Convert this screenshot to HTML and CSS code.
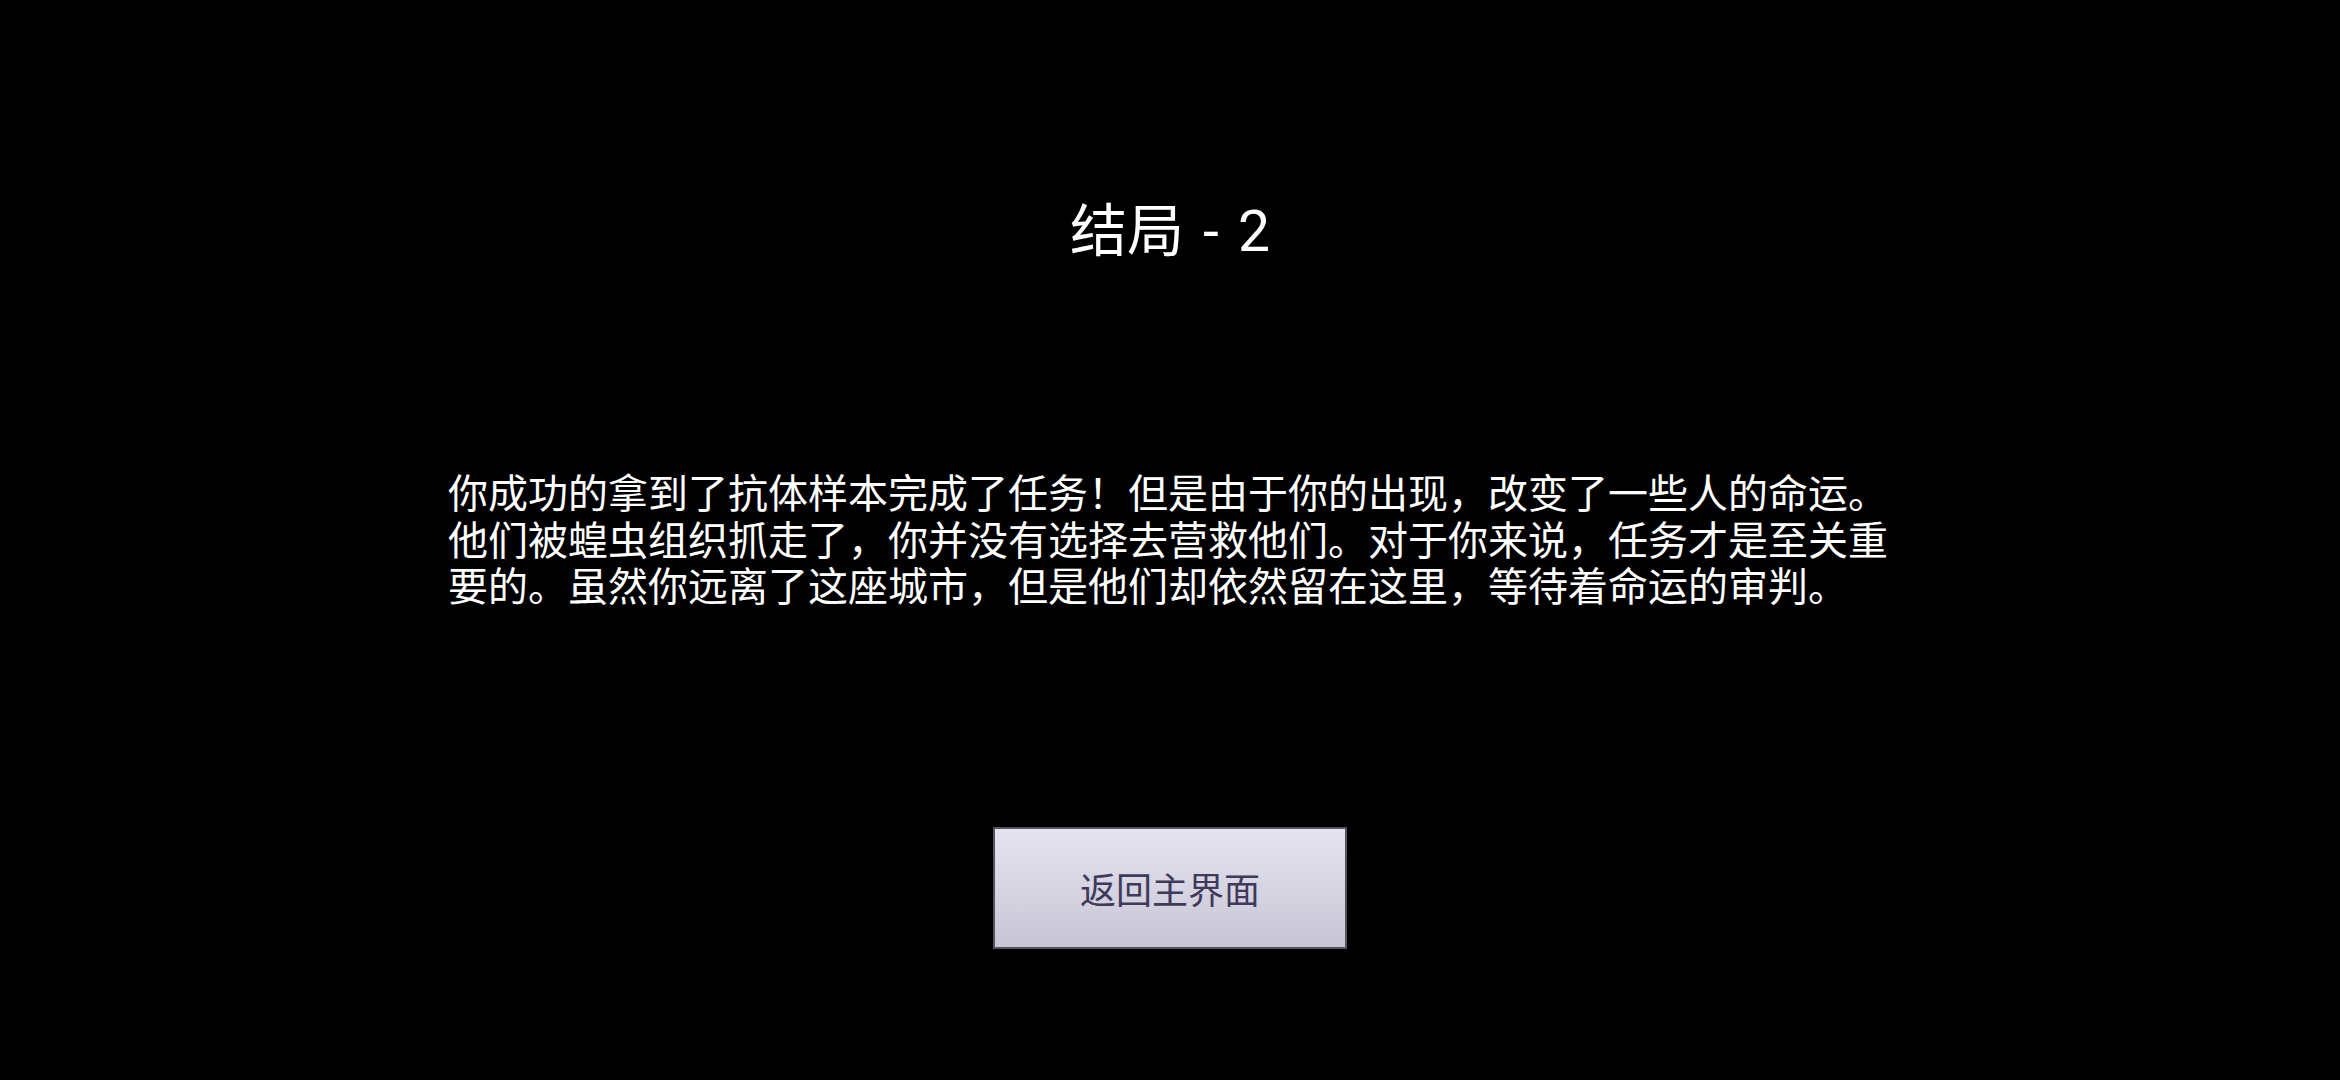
FILE: index.html
```html
<!DOCTYPE html>
<html lang="zh-CN">

<head>
    <meta charset="UTF-8">
    <meta name="viewport" content="width=device-width, initial-scale=1.0">
    <title>结局 - 2</title>
    <link rel="stylesheet" href="styles.css">
</head>

<body>

    <div class="ending">
        <h1 class="ending-title">结局 - 2</h1>

        <p class="ending-text">你成功的拿到了抗体样本完成了任务！但是由于你的出现，改变了一些人的命运。他们被蝗虫组织抓走了，你并没有选择去营救他们。对于你来说，任务才是至关重要的。虽然你远离了这座城市，但是他们却依然留在这里，等待着命运的审判。</p>

        <button class="back-btn">返回主界面</button>
    </div>

</body>

</html>
```

FILE: styles.css
```css
body {
    margin: 0;
    background-color: #000;
    color: #fff;
    font-family: Roboto, "Noto Sans CJK SC", sans-serif;
}

.ending {
    display: flex;
    flex-direction: column;
    align-items: center;
    height: 1080px;
}

.ending-title {
    margin: 204px 0 0;
    font-size: 57px;
    font-weight: normal;
    line-height: 56px;
    word-spacing: 5px;
}

.ending-text {
    width: 1444px;
    margin: 212px 0 0;
    font-size: 40px;
    line-height: 46.5px;
    text-align: left;
}

.back-btn {
    width: 354px;
    height: 122px;
    margin-top: 215px;
    border: 2px solid #56535f;
    background: linear-gradient(#e5e3ef, #c8c6d5);
    color: #3f3a5a;
    font-family: "Noto Sans CJK SC", sans-serif;
    font-size: 36px;
    cursor: pointer;
}
```
